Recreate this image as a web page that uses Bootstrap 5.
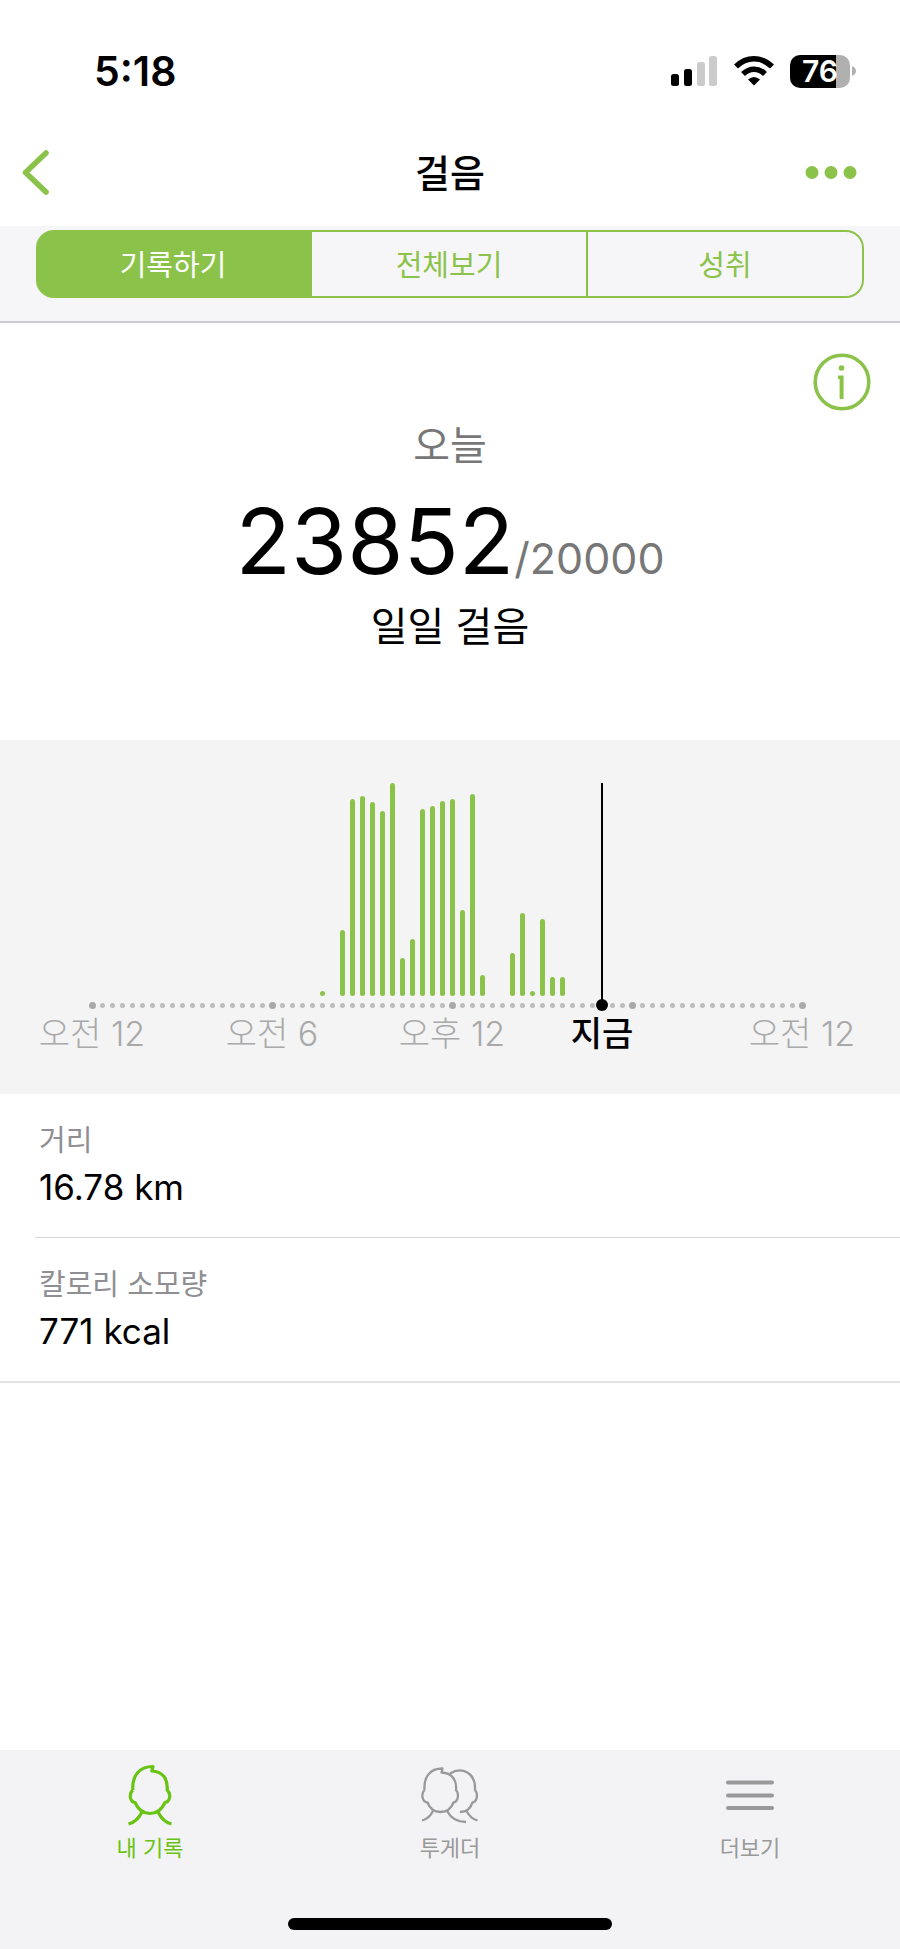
<!DOCTYPE html>
<html lang="ko">
<head>
<meta charset="utf-8">
<meta name="viewport" content="width=device-width, initial-scale=1">
<title>걸음</title>
<link href="https://cdn.jsdelivr.net/npm/bootstrap@5.3.0/dist/css/bootstrap.min.css" rel="stylesheet">
<style>
  :root { --leaf: #8bc34a; --leaf-bright: #68c313; --hair: #d9d9db; }
  body { font-family: Inter, "Noto Sans CJK KR", sans-serif; color: #000; background: #fff; }
  svg { display: block; }
  .text-leaf { color: var(--leaf); }

  .status-bar { height: 120px; padding: 22px 44px 0 94px; }
  .clock { font-size: 41px; line-height: 48px; font-weight: 600; }
  .battery { width: 60px; height: 33px; border-radius: 10px; color: #fff; font-size: 30px; line-height: 33px; font-weight: 600;
    background: linear-gradient(90deg, #000 76%, #b0b0b0 76%); }

  .title-bar { height: 106px; padding: 0 42px 0 20px; }
  .title-bar h1 { font-size: 38px; line-height: 48px; font-weight: 500; margin: 29px 0 0; }

  .segment-bar { padding: 4px 36px 23px; background: #f6f6f8; border-bottom: 2px solid #cdcdcf; }
  .segments .btn { flex: 1 1 0; border: 2px solid var(--leaf); border-left: 0; border-radius: 0; padding: 12px 0 8px;
    font-size: 29px; line-height: 44px; color: var(--leaf); }
  .segments .btn:first-child { border-radius: 18px 0 0 18px; }
  .segments .btn:last-child { border-radius: 0 18px 18px 0; }
  .segments .btn.active { background: var(--leaf); color: #fff; }

  .summary { padding: 30px 29px 85px; }
  .caption-lg { font-size: 40px; line-height: 56px; }
  .day { margin: 7px 0 0; }
  .soft { color: #777; }
  .count { font-size: 91px; line-height: 96px; margin: 19px 0 10px; }
  .goal { font-size: 43px; line-height: 1; }

  .chart { background: #f4f4f4; padding: 43px 93px 40px 87px; }
  .slots { display: grid; grid-template-columns: repeat(72, minmax(0, 1fr)); }
  .slot { position: relative; display: flex; justify-content: center; }
  .plot { height: 213px; align-items: end; }
  .step-bar { width: 5px; border-radius: 3px; background: var(--leaf); }
  .axis { height: 18px; align-items: center; }
  .tick { width: 5px; height: 5px; border-radius: 50%; background: #bcbcbc; flex: none; }
  .tick.major { width: 7px; height: 7px; background: #a9a9a9; }
  .tick.now { width: 12px; height: 12px; background: #000; }
  .now-line { position: absolute; bottom: 6px; width: 2px; height: 222px; background: #000; }
  .hours { height: 40px; font-size: 34px; line-height: 40px; font-weight: 300; color: #a9a9a9; white-space: nowrap; }
  .hours .current { color: #000; font-weight: 500; }

  .stats { margin: 0; border-bottom: 2px solid #e3e3e5; }
  .stat { margin-left: 35px; padding: 24px 4px 27px; }
  .stat + .stat { border-top: 1px solid var(--hair); }
  .stat dt { font-size: 29px; line-height: 46px; font-weight: 400; color: #8e8e93; }
  .stat dd { margin: 0; font-size: 35px; line-height: 46px; }

  .tab-bar { background: #f3f3f6; padding: 10px 0 19px; }
  .tab { color: #999; text-decoration: none; font-size: 22px; line-height: 32px; gap: 2px; }
  .tab.active { color: var(--leaf-bright); }
  .home-bar { width: 36%; height: 12px; border-radius: 6px; background: #000; margin-top: 54px; }
</style>
</head>
<body class="d-flex flex-column min-vh-100">

<div class="status-bar d-flex align-items-center justify-content-between">
  <span class="clock">5:18</span>
  <div class="d-flex align-items-center">
    <svg width="47" height="32" viewBox="0 0 47 32" aria-label="신호">
      <rect x="0" y="19" width="8" height="12" rx="2.5"/><rect x="13" y="14" width="8" height="17" rx="2.5"/>
      <g fill="#cbcbcb"><rect x="26" y="7" width="8" height="24" rx="2.5"/><rect x="38" y="1" width="8" height="30" rx="2.5"/></g>
    </svg>
    <svg class="ms-3" width="40" height="32" viewBox="0 0 40 32" aria-label="와이파이">
      <g fill="none" stroke="#000" stroke-width="5.6"><path d="M2 11.5Q10 3.8 20 3.8T38 11.5"/><path d="M9 19Q14 14.2 20 14.2T31 19"/></g>
      <path d="M20 30.5 14 24.6Q20 19.5 26 24.6Z"/>
    </svg>
    <span class="battery text-center ms-3">76</span>
    <svg width="6" height="12" viewBox="0 0 6 12"><path d="M2 1Q6 3 6 6T2 11Z" fill="#b0b0b0"/></svg>
  </div>
</div>

<header class="title-bar d-flex align-items-start justify-content-between">
  <button class="btn p-0 border-0 text-leaf" type="button" aria-label="뒤로">
    <svg width="76" height="104" viewBox="0 0 76 104"><path d="M26 33 5.500 52.500 26 72" fill="none" stroke="currentColor" stroke-width="5.600" stroke-linecap="round" stroke-linejoin="round"/></svg>
  </button>
  <h1>걸음</h1>
  <button class="btn p-0 border-0 text-leaf" type="button" aria-label="더 많은 메뉴">
    <svg width="54" height="104" viewBox="0 0 54 104" fill="currentColor"><circle cx="8" cy="52.500" r="6.500"/><circle cx="27" cy="52.500" r="6.500"/><circle cx="46" cy="52.500" r="6.500"/></svg>
  </button>
</header>

<div class="segment-bar">
  <div class="segments d-flex" role="group" aria-label="보기">
    <button type="button" class="btn active">기록하기</button>
    <button type="button" class="btn">전체보기</button>
    <button type="button" class="btn">성취</button>
  </div>
</div>

<main>
  <section class="summary d-flex flex-column text-center">
    <button class="btn p-0 border-0 text-leaf align-self-end" type="button" aria-label="정보">
      <svg width="58" height="58" viewBox="0 0 58 58"><circle cx="29" cy="29" r="26.800" fill="none" stroke="currentColor" stroke-width="3.600"/><circle cx="28.500" cy="15" r="2.800" fill="currentColor"/><path d="M25 22.500h5.600v23.500h-4V26H25Z" fill="currentColor"/></svg>
    </button>
    <p class="caption-lg soft day">오늘</p>
    <p class="count">23852<span class="goal soft">/20000</span></p>
    <p class="caption-lg mb-0">일일 걸음</p>
  </section>

  <section class="chart" aria-label="시간대별 걸음">
    <div class="slots plot" id="plot"></div>
    <div class="slots axis" id="axis"></div>
    <div class="slots hours" id="hours"></div>
  </section>

  <dl class="stats">
    <div class="stat"><dt>거리</dt><dd>16.78 km</dd></div>
    <div class="stat"><dt>칼로리 소모량</dt><dd>771 kcal</dd></div>
  </dl>
</main>

<footer class="tab-bar mt-auto d-flex flex-column align-items-center">
  <nav class="row g-0 w-100 text-center">
    <a href="#" class="tab active col d-flex flex-column align-items-center" aria-current="page">
      <svg width="60" height="70" viewBox="0 0 60 70" fill="none" stroke="currentColor" stroke-width="3.200" stroke-linejoin="round">
        <path d="M12.800 30C12 16 19 6.500 33 6.500L31.800 11C43 11.500 48 19 47.200 30C51.500 34 50 42 45 42.500C41.500 50.500 37 53.500 30 53.500S18.500 50.500 15 42.500C10 42 8.500 34 12.800 30"/>
        <path d="M22 52Q17 62 8.500 64M38 52Q43 62 51.500 64"/>
      </svg>
      <span>내 기록</span>
    </a>
    <a href="#" class="tab col d-flex flex-column align-items-center">
      <svg width="60" height="70" viewBox="0 0 60 70" fill="none" stroke="currentColor" stroke-width="2.300" stroke-linejoin="round">
        <path d="M4.500 30C3.500 17 10 8.500 22.500 8.500L21.500 12.500C32 13 37 20 36 30C39.500 34 38 42 33.500 42.500C31 49 27 52 20.500 52S10 49 7.500 42.500C2 42 .8 34 4.500 30"/>
        <path d="M13 51Q9 59 2 60.500M27 51Q33 62 46 62M30 13.500C42 6 56 13 55 30C58.500 34 57 42 52.500 42.500C50 49 47 52 40 52M46.500 51Q51 59 57.500 60.500"/>
      </svg>
      <span>투게더</span>
    </a>
    <a href="#" class="tab col d-flex flex-column align-items-center">
      <svg width="60" height="70" viewBox="0 0 60 70" stroke="currentColor" stroke-width="4" stroke-linecap="round"><path d="M8 22.500h44M8 35.500h44M8 48h44"/></svg>
      <span>더보기</span>
    </a>
  </nav>
  <div class="home-bar"></div>
</footer>

<script src="https://cdn.jsdelivr.net/npm/bootstrap@5.3.0/dist/js/bootstrap.bundle.min.js"></script>
<script>
  // One slot is 20 minutes of the day; values are bar heights in pixels.
  const steps = { 23: 5, 25: 66, 26: 197, 27: 200, 28: 194, 29: 185, 30: 213, 31: 38, 32: 57, 33: 187, 34: 190, 35: 195,
    36: 197, 37: 86, 38: 202, 39: 21, 42: 43, 43: 83, 44: 5, 45: 77, 46: 19, 47: 19 };
  const labels = { 0: '오전 12', 18: '오전 6', 36: '오후 12', 51: '지금', 71: '오전 12' };
  const major = [0, 18, 36, 54, 71], now = 51;
  let bars = '', ticks = '', hours = '';
  for (let i = 0; i < 72; i++) {
    bars += `<div class="slot">${steps[i] ? `<div class="step-bar" style="height:${steps[i]}px"></div>` : ''}</div>`;
    ticks += i === now ? '<div class="slot"><span class="now-line"></span><span class="tick now"></span></div>'
      : `<div class="slot"><span class="tick${major.includes(i) ? ' major' : ''}"></span></div>`;
    hours += `<div class="slot${i === now ? ' current' : ''}">${labels[i] ? `<span>${labels[i]}</span>` : ''}</div>`;
  }
  document.getElementById('plot').innerHTML = bars;
  document.getElementById('axis').innerHTML = ticks;
  document.getElementById('hours').innerHTML = hours;
</script>
</body>
</html>
